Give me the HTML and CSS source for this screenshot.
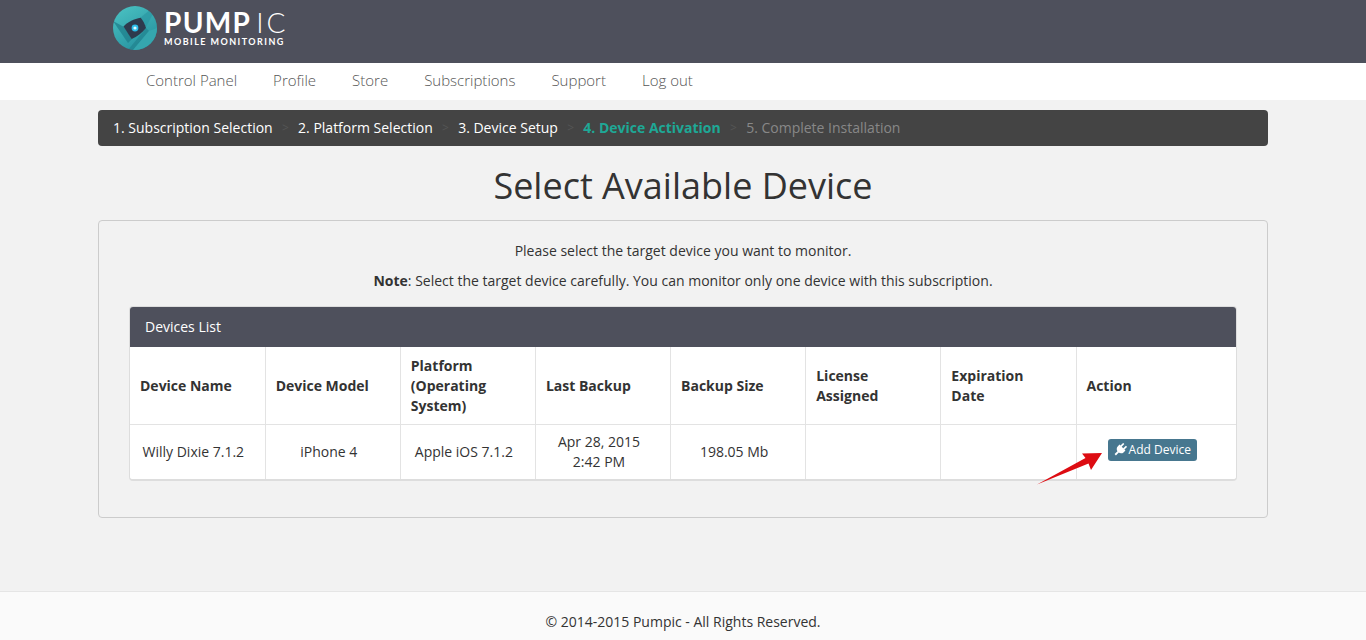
FILE: index.html
```html
<!DOCTYPE html>
<html lang="en">
<head>
    <meta charset="UTF-8">
    <meta name="viewport" content="width=device-width, initial-scale=1.0">
    <title>Select Available Device</title>
    <link rel="stylesheet" href="styles.css">
</head>
<body>
    <header class="top">
        <div class="wrap logo">
            <svg class="logo-mark" width="44" height="44" viewBox="0 0 44 44">
                <defs>
                    <clipPath id="disc"><circle cx="22" cy="22" r="22"/></clipPath>
                    <linearGradient id="teal" x1="0" y1="0" x2="0.6" y2="1">
                        <stop offset="0" stop-color="#4cc4c4"/>
                        <stop offset="1" stop-color="#2793a0"/>
                    </linearGradient>
                </defs>
                <g clip-path="url(#disc)">
                    <rect width="44" height="44" fill="url(#teal)"/>
                    <path d="M0 15 L11 21 L19 33 L15 37 Z" fill="#1f7f8b" opacity=".75"/>
                    <path d="M15 44 L33 22 L36 25 L20 44 Z" fill="#1f7f8b" opacity=".6"/>
                    <path d="M27 12 L38 3 L41 6 L33 21 Z" fill="#2b97a2" opacity=".7"/>
                    <path d="M36 25 L44 22 L44 44 L20 44 Z" fill="#35a6ae"/>
                </g>
                <path d="M10.5 20.5 C15 15.5 21 13 27.7 11.7 C30 14.5 32 18 33 22 C29 27 24 30.5 18.7 33 C16 29 13 24.5 10.5 20.5 Z" fill="#2e3a4d"/>
                <circle cx="22" cy="22" r="3.4" fill="#2bbdea"/>
                <circle cx="22" cy="22" r="1.6" fill="#dffaff"/>
            </svg>
            <div class="logo-text">
                <div class="logo-name"><b>PUMP</b><span class="logo-thin">IC</span></div>
                <div class="logo-sub">MOBILE MONITORING</div>
            </div>
        </div>
    </header>

    <nav class="menu">
        <div class="wrap menu-links">
            <a href="#">Control Panel</a>
            <a href="#">Profile</a>
            <a href="#">Store</a>
            <a href="#">Subscriptions</a>
            <a href="#">Support</a>
            <a href="#">Log out</a>
        </div>
    </nav>

    <main class="wrap">
        <ol class="steps">
            <li class="done">1. Subscription Selection</li>
            <li class="sep">&gt;</li>
            <li class="done">2. Platform Selection</li>
            <li class="sep">&gt;</li>
            <li class="done">3. Device Setup</li>
            <li class="sep">&gt;</li>
            <li class="current">4. Device Activation</li>
            <li class="sep">&gt;</li>
            <li class="next">5. Complete Installation</li>
        </ol>

        <h1>Select Available Device</h1>

        <section class="box">
            <p>Please select the target device you want to monitor.</p>
            <p><b>Note</b>: Select the target device carefully. You can monitor only one device with this subscription.</p>

            <div class="panel">
                <div class="panel-head">Devices List</div>
                <table>
                    <thead>
                        <tr>
                            <th>Device Name</th>
                            <th>Device Model</th>
                            <th>Platform (Operating System)</th>
                            <th>Last Backup</th>
                            <th>Backup Size</th>
                            <th>License Assigned</th>
                            <th>Expiration<br>Date</th>
                            <th>Action</th>
                        </tr>
                    </thead>
                    <tbody>
                        <tr>
                            <td>Willy Dixie 7.1.2</td>
                            <td>iPhone 4</td>
                            <td>Apple iOS 7.1.2</td>
                            <td>Apr 28, 2015<br>2:42 PM</td>
                            <td>198.05 Mb</td>
                            <td></td>
                            <td></td>
                            <td class="action">
                                <a class="add-btn" href="#">
                                    <svg width="13" height="13" viewBox="0 0 14 14"><g transform="rotate(45 7 7)"><path d="M4 0 H5.8 V4 H4 Z M8.2 0 H10 V4 H8.2 Z M2.5 4 H11.5 V6.5 C11.5 9 9.5 10.5 8 10.6 V15 H6 V10.6 C4.5 10.5 2.5 9 2.5 6.5 Z" fill="#fff"/></g></svg>
                                    Add Device
                                </a>
                                <svg class="arrow" width="68" height="36" viewBox="0 0 68 36">
                                    <path d="M0 34.5 L48.5 8 L45 3.5 L65 3 L54 20 L51.5 13.5 Z" fill="#dd0c12"/>
                                </svg>
                            </td>
                        </tr>
                    </tbody>
                </table>
            </div>
        </section>
    </main>

    <footer class="foot">© 2014-2015 Pumpic - All Rights Reserved.</footer>
</body>
</html>
```

FILE: styles.css
```css
* { box-sizing: border-box; }
body { margin: 0; background: #f2f2f2; color: #333; font-family: "Open Sans", sans-serif; font-size: 14px; line-height: 20px; }
.wrap { width: 1170px; margin: 0 auto; }

.top { height: 63px; background: #4e505c; }
.logo { display: flex; align-items: center; gap: 7px; height: 63px; padding: 0 0 7px 15px; }
.logo-mark { display: block; }
.logo-text { color: #fff; font-family: Lato, sans-serif; }
.logo-name { font-size: 28px; line-height: 26px; letter-spacing: 1.3px; }
.logo-name b { font-weight: 700; }
.logo-thin { margin-left: 5px; font-weight: 300; letter-spacing: 3px; }
.logo-sub { margin-top: 2px; font-size: 9px; line-height: 10px; font-weight: 700; letter-spacing: 1.45px; }

.menu { height: 37px; background: #fff; }
.menu-links { display: flex; gap: 36px; padding-left: 48px; }
.menu-links a { color: #555; font-size: 15px; font-weight: 300; line-height: 35px; text-decoration: none; }

.steps { display: flex; height: 36px; margin: 10px 0 0; padding: 0 15px; list-style: none; background: #444; border-radius: 4px; line-height: 36px; }
.done { color: #fff; }
.sep { width: 25.4px; text-align: center; color: #555; font-size: 12px; }
.current { color: #1ea896; font-weight: 700; }
.next { color: #888; }

h1 { margin: 17px 0 11px; text-align: center; font-size: 36px; font-weight: 400; line-height: 46px; color: #333; }

.box { height: 298px; padding: 20px 30px 0; border: 1px solid #ccc; border-radius: 4px; text-align: center; }
.box p { margin: 0 0 10px; }
.box p + p { margin-bottom: 15px; }

.panel { background: #fff; border: 1px solid #ddd; border-bottom-width: 2px; border-radius: 4px; }
.panel-head { height: 40px; padding: 0 15px; background: #4e505c; border-radius: 3px 3px 0 0; color: #fff; line-height: 40px; text-align: left; }

table { width: 100%; border-collapse: collapse; table-layout: fixed; }
th, td { border-left: 1px solid #e3e3e3; }
th:first-child, td:first-child { border-left: 0; }
th { height: 77px; padding: 9px 10px 7px; text-align: left; font-weight: 700; border-bottom: 1px solid #e3e3e3; }
td { height: 55px; padding: 7px 18px 7px 10px; text-align: center; }
th:last-child { width: 160px; }

td.action { position: relative; padding-top: 5px; padding-bottom: 9px; }
.add-btn { display: inline-flex; align-items: center; gap: 2px; height: 22px; padding: 0 6px; vertical-align: middle; background: #47778f; border-radius: 3px; color: #fff; font-size: 12px; line-height: 22px; text-decoration: none; }
.arrow { position: absolute; left: -40px; top: 25px; }

.foot { height: 49px; margin-top: 73px; padding-top: 20px; background: #fafafa; border-top: 1px solid #e5e5e5; text-align: center; }
```
